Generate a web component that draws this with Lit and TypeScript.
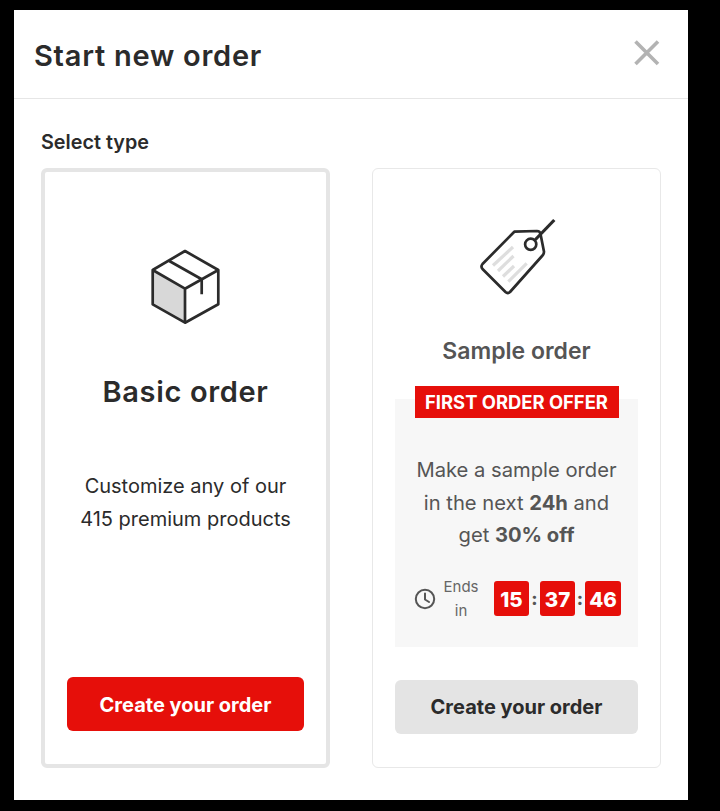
import { LitElement, html, css } from "lit";
import { customElement } from "lit/decorators.js";

@customElement("app-root")
export class AppRoot extends LitElement {
  static styles = css`
    :host { display: block; height: 811px; background: #000; font-family: "Inter", "Liberation Sans", sans-serif; color: #2b2b2b; }
    * { box-sizing: border-box; }
    .page { height: 811px; padding: 10px 32px 11px 14px; }
    .modal { height: 790px; background: #fff; display: flex; flex-direction: column; }
    .head { height: 89px; flex: none; border-bottom: 1px solid #e6e6e6; display: flex; align-items: center; justify-content: space-between; padding: 0 26px 0 20px; }
    .head h1 { margin: 4px 0 0; font-size: 29px; font-weight: 600; letter-spacing: 0.75px; line-height: 36px; }
    .close { display: block; width: 30px; height: 30px; margin-top: -2px; }
    .body { flex: 1; padding: 31px 27px 32px; display: flex; flex-direction: column; }
    .label { font-size: 19.8px; font-weight: 600; line-height: 24px; margin: 0 14px 14px 0; height: 24px; }
    .cards { display: flex; gap: 42px; height: 600px; }
    .card { width: 289px; height: 600px; border-radius: 6px; display: flex; flex-direction: column; align-items: center; background: #fff; }
    .basic { border: 4px solid #e5e5e5; padding: 0 22px; }
    .sample { border: 1px solid #e8e8e8; padding: 0 22px; color: #555; }
    .basic svg { margin-top: 77px; flex: none; }
    .basic h2 { margin: 49px 0 0; font-size: 29px; font-weight: 600; letter-spacing: 0.65px; line-height: 36px; color: #2b2b2b; }
    .basic p { margin: 60px 0 0; font-size: 20px; line-height: 33px; text-align: center; color: #2b2b2b; }
    .btn { width: 100%; height: 54px; border-radius: 6px; display: flex; align-items: center; justify-content: center; font-size: 20px; font-weight: 700; flex: none; }
    .red { background: #e60f0a; color: #fff; margin-top: auto; margin-bottom: 33px; width: 237px; padding-top: 1px; }
    .grey { background: #e4e4e4; color: #2b2b2b; margin-top: 33px; width: 243px; }
    .sample svg.tag { margin-top: 49px; flex: none; }
    .sample h3 { margin: 40px 0 0; font-size: 23px; line-height: 30px; font-weight: 600; color: #555; }
    .offer { width: 243px; height: 248px; margin-top: 33px; background: #f7f7f7; display: flex; flex-direction: column; align-items: center; flex: none; }
    .banner { width: 204px; height: 32px; margin-top: -13px; background: #e60f0a; color: #fff; font-size: 18.4px; font-weight: 700; display: flex; align-items: center; justify-content: center; white-space: nowrap; flex: none; }
    .offer p { margin: 36px 0 0; font-size: 20.2px; line-height: 32.5px; text-align: center; color: #555; }
    .offer b { font-weight: 700; }
    .timer { margin-top: 23px; display: flex; align-items: center; width: 100%; padding-left: 19px; }
    .clock { display: block; flex: none; }
    .ends { width: 36px; margin-left: 7px; font-size: 15px; line-height: 24px; text-align: center; color: #666; }
    .digit { width: 35px; height: 35px; padding-top: 1px; border-radius: 3px; background: #e60f0a; color: #fff; font-size: 20.5px; font-weight: 800; display: flex; align-items: center; justify-content: center; flex: none; }
    .digit.first { margin-left: 15px; }
    .colon { width: 11px; text-align: center; font-size: 18px; font-weight: 800; color: #555; flex: none; }
    .digit.wide { width: 36px; }
    .colon.narrow { width: 10px; }
  `;

  render() {
    return html`
      <div class="page">
        <div class="modal">
          <div class="head">
            <h1>Start new order</h1>
            <svg class="close" viewBox="0 0 30 30" fill="none" stroke="#b3b3b3" stroke-width="3.6">
              <path d="M3.5 3.5 L26 26 M26 3.5 L3.5 26" />
            </svg>
          </div>
          <div class="body">
            <div class="label">Select type</div>
            <div class="cards">
              <div class="card basic">
                <svg width="70" height="76" viewBox="151 248 70 76" fill="none" stroke="#2b2b2b" stroke-width="2.7" stroke-linejoin="round" stroke-linecap="butt">
                  <path d="M152.7 269 L185 287.7 L185 321.7 L152.7 303.3 Z" fill="#d8d8d8" stroke="none" />
                  <path d="M185 250 L218.3 269 L218.3 303.3 L185 321.7 L152.7 303.3 L152.7 269 Z" />
                  <path d="M152.7 269 L185 287.7 L218.3 269 M185 287.7 L185 321.7" />
                  <path d="M169.3 260 L201.7 278.3 L201.7 293.3" />
                </svg>
                <h2>Basic order</h2>
                <p>Customize any of our<br />415 premium products</p>
                <div class="btn red">Create your order</div>
              </div>
              <div class="card sample">
                <svg class="tag" width="78" height="78" viewBox="478 218 78 78" fill="none" stroke="#2b2b2b" stroke-width="2.7" stroke-linejoin="round" stroke-linecap="round">
                  <g stroke="#dedede" stroke-width="3.2" stroke-linecap="butt">
                    <path d="M513 247 L493 265.5" />
                    <path d="M513.5 256 L498 271" />
                    <path d="M514 266 L503 276.5" />
                    <path d="M526.7 263.3 L508.3 281.7" />
                  </g>
                  <path d="M514.3 231.7 L537 231 Q540 231 540.5 234 L544 251.7 Q544 254 542.5 255.5 L510 292 Q507.7 294 505.5 292 L482.5 269 Q480.5 266.5 482.5 264 Z" />
                  <circle cx="530.7" cy="244.3" r="5.6" />
                  <path d="M535 240 L554.3 220" stroke-width="3.2" stroke-linecap="butt" />
                </svg>
                <h3>Sample order</h3>
                <div class="offer">
                  <div class="banner">FIRST ORDER OFFER</div>
                  <p>Make a sample order<br />in the next <b>24h</b> and<br />get <b>30% off</b></p>
                  <div class="timer">
                    <svg class="clock" width="22" height="22" viewBox="0 0 22 22" fill="none" stroke="#555" stroke-width="2" stroke-linecap="round" stroke-linejoin="round">
                      <circle cx="11" cy="11" r="9.2" />
                      <path d="M11 5.5 L11 11.5 L15 14" />
                    </svg>
                    <div class="ends">Ends in</div>
                    <div class="digit first">15</div>
                    <div class="colon">:</div>
                    <div class="digit">37</div>
                    <div class="colon narrow">:</div>
                    <div class="digit wide">46</div>
                  </div>
                </div>
                <div class="btn grey">Create your order</div>
              </div>
            </div>
          </div>
        </div>
      </div>
    `;
  }
}
